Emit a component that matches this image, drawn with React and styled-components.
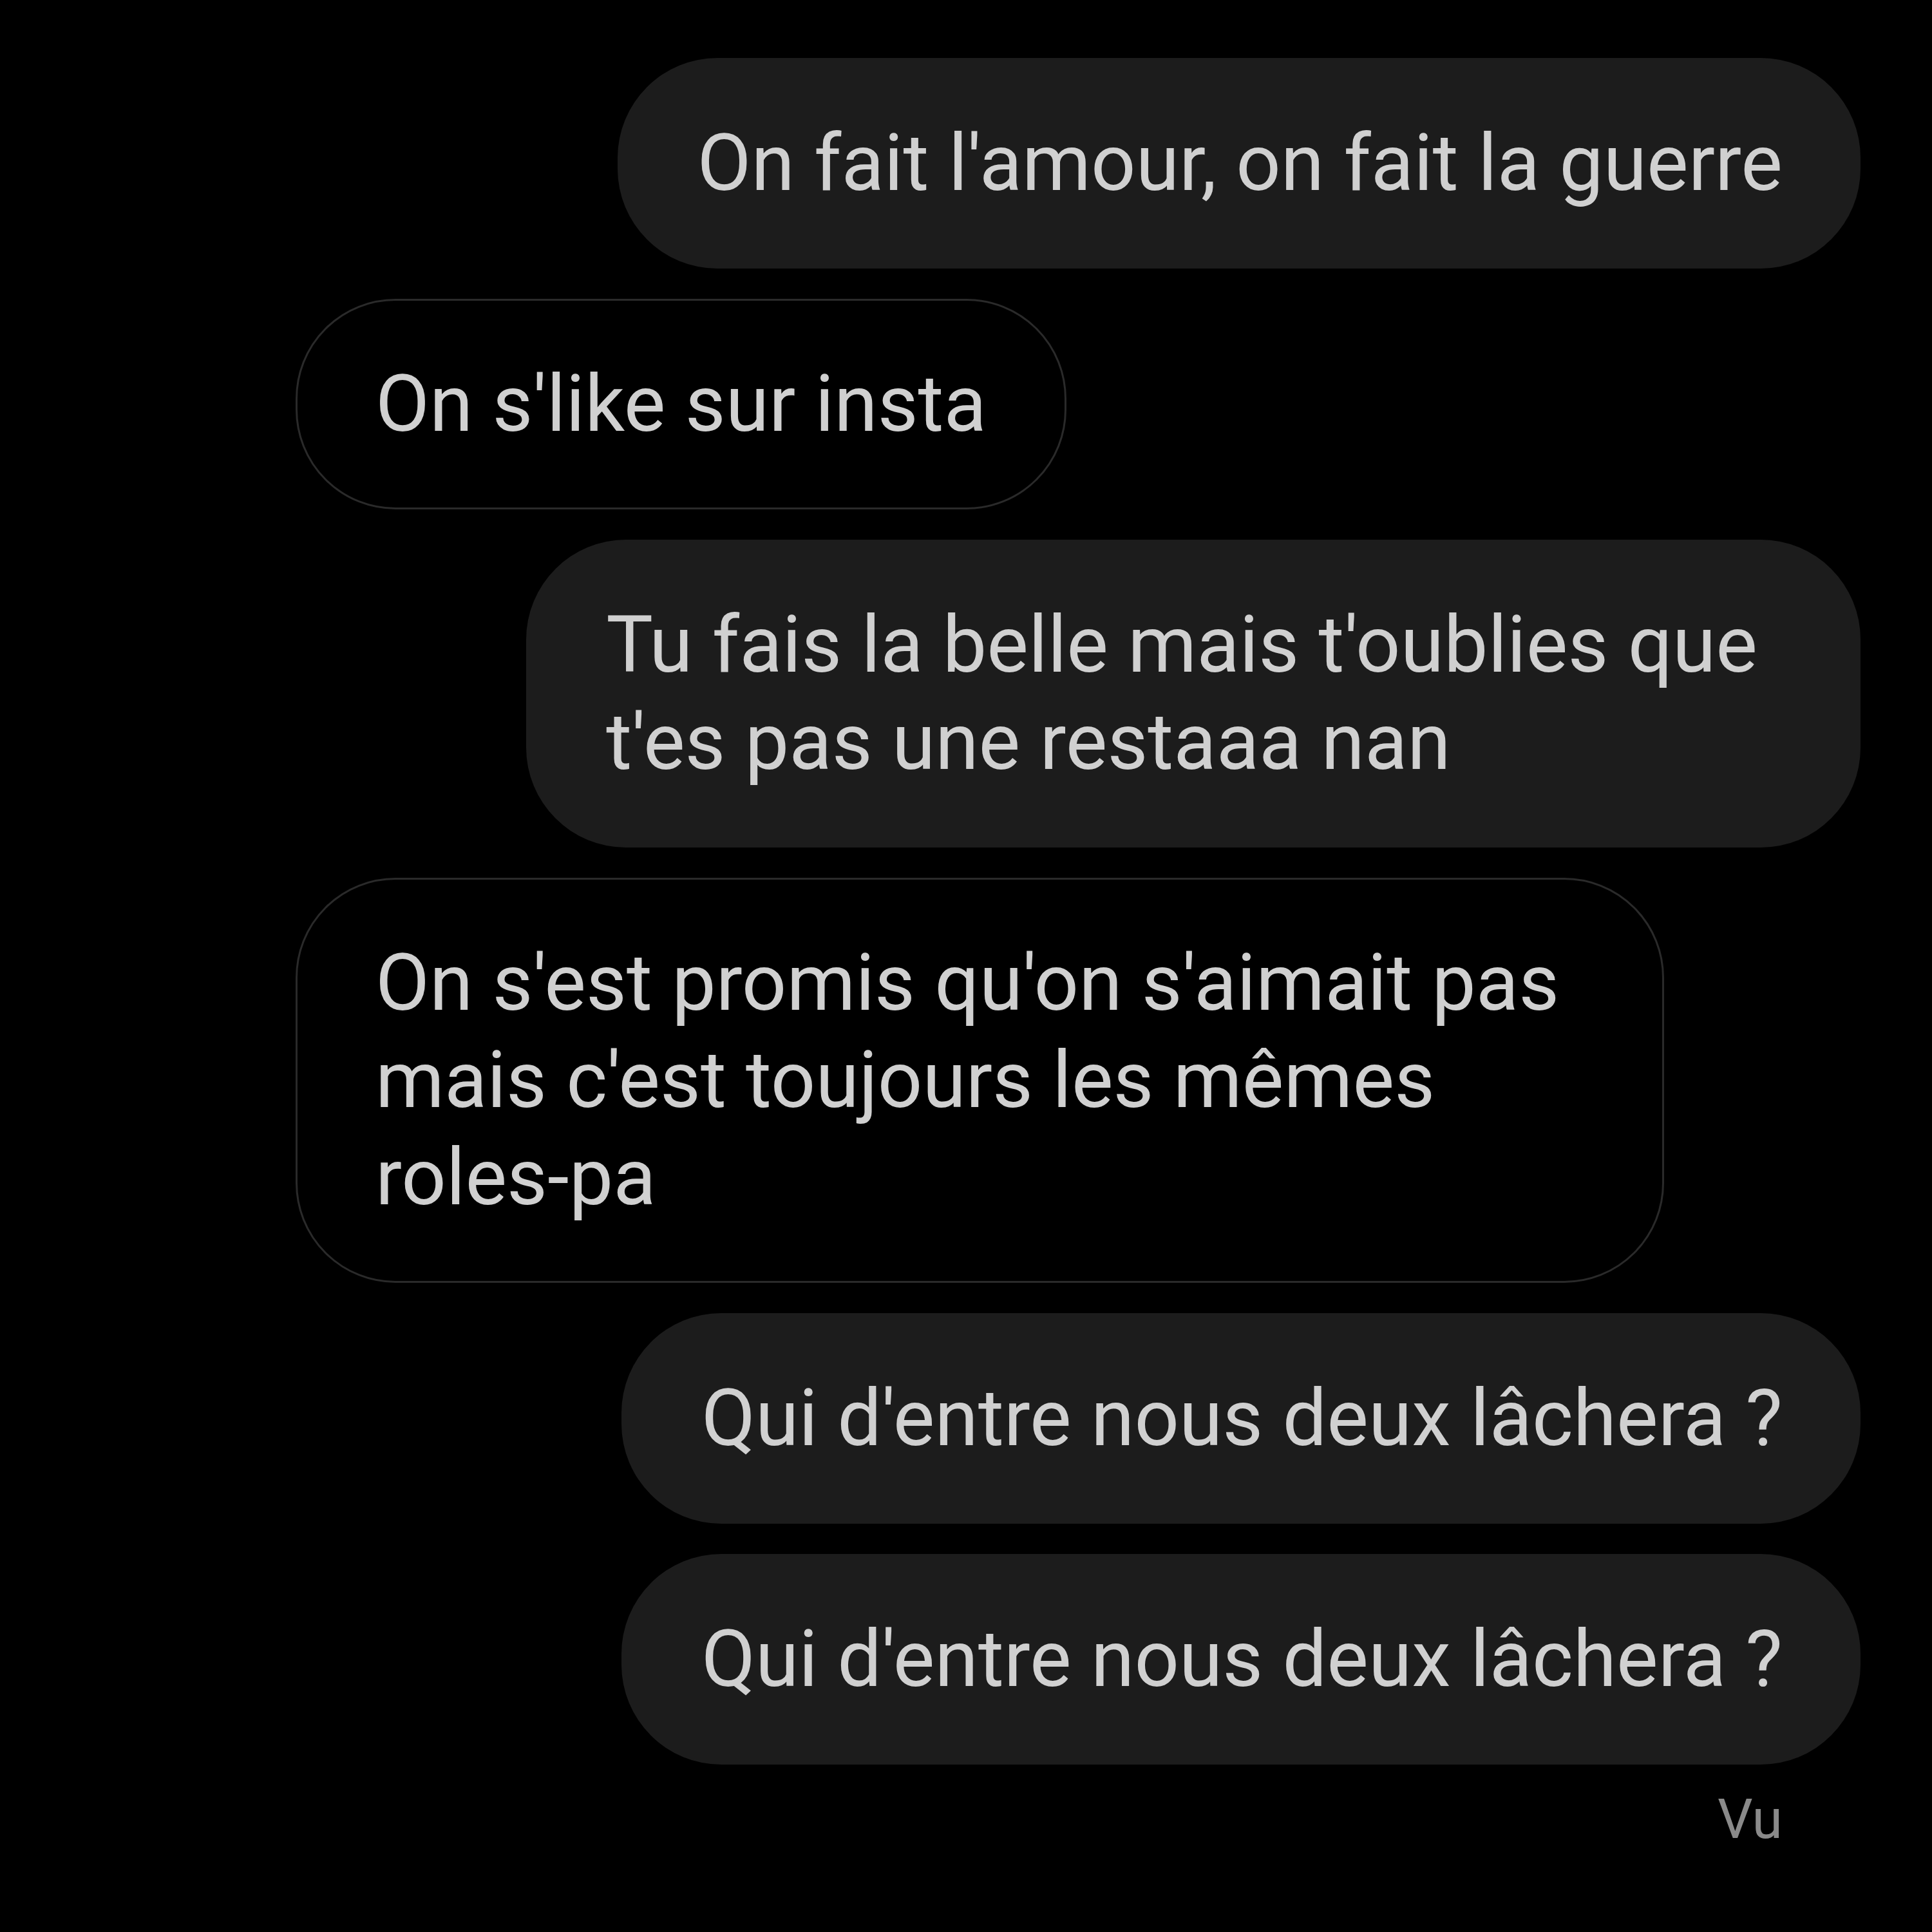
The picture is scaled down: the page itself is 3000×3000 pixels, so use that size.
import styled, { createGlobalStyle } from "styled-components";

const GlobalStyle = createGlobalStyle`
    html, body {
        margin: 0;
        padding: 0;
        background: #000;
    }
`;

const Thread = styled.div`
    width: 3000px;
    height: 3000px;
    box-sizing: border-box;
    padding: 90px 111px 0 459px;
    background: #000;
    display: flex;
    flex-direction: column;
    gap: 47px;
    font-family: Roboto, "Noto Sans", sans-serif;
    color: #d0d0d0;
`;

const Bubble = styled.div`
    align-self: ${(p) => (p.$sent ? "flex-end" : "flex-start")};
    box-sizing: border-box;
    padding: ${(p) => (p.$sent ? "88px" : "85px")} ${(p) => (p.$multi ? "160px" : "121px")}
        ${(p) => (p.$sent ? "88px" : "85px")} ${(p) => (p.$sent ? "124px" : "121px")};
    border-radius: 155px;
    background: ${(p) => (p.$sent ? "#1c1c1c" : "#000")};
    border: ${(p) => (p.$sent ? "none" : "3px solid #2a2a2a")};
    font-size: 122px;
    line-height: 151px;
    white-space: nowrap;
`;

const Seen = styled.div`
    align-self: flex-end;
    margin-right: 121px;
    font-size: 86px;
    line-height: 76px;
    color: #8a8a8a;
`;

const messages = [
    { sent: true, lines: ["On fait l'amour, on fait la guerre"] },
    { sent: false, lines: ["On s'like sur insta"] },
    { sent: true, lines: ["Tu fais la belle mais t'oublies que", "t'es pas une restaaa nan"] },
    { sent: false, lines: ["On s'est promis qu'on s'aimait pas", "mais c'est toujours les mêmes", "roles-pa"] },
    { sent: true, lines: ["Qui d'entre nous deux lâchera ?"] },
    { sent: true, lines: ["Qui d'entre nous deux lâchera ?"] },
];

function App() {
    return (
        <>
            <GlobalStyle />
            <Thread>
                {messages.map((msg, i) => (
                    <Bubble key={i} $sent={msg.sent} $multi={msg.lines.length > 1}>
                        {msg.lines.map((line, j) => (
                            <span key={j}>
                                {line}
                                {j !== msg.lines.length - 1 && <br />}
                            </span>
                        ))}
                    </Bubble>
                ))}
                <Seen>Vu</Seen>
            </Thread>
        </>
    );
}

export default App;
